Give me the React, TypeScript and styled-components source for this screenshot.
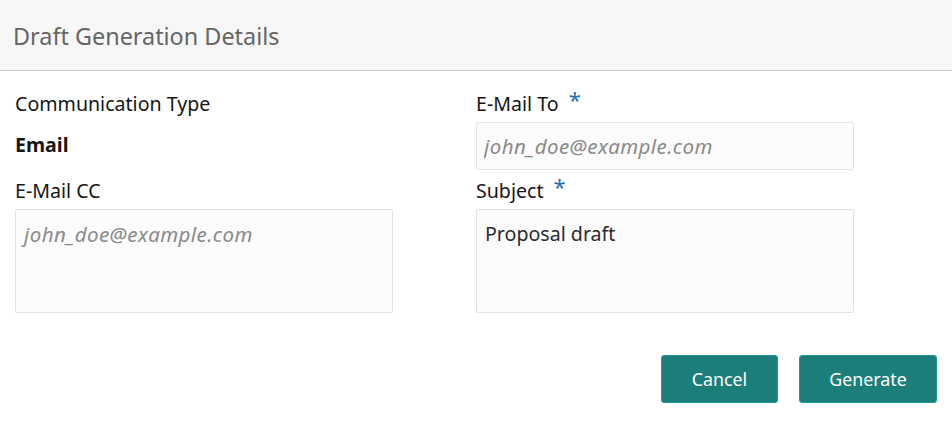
import React from "react";
import styled, { createGlobalStyle } from "styled-components";

const GlobalStyle = createGlobalStyle`
  html, body {
    margin: 0;
    padding: 0;
    background: #ffffff;
    font-family: "Noto Sans", "Open Sans", sans-serif;
  }
  * { box-sizing: border-box; }
`;

const App = () => {
  return (
    <>
      <GlobalStyle />
      <Panel>
        <Header>
          <Title>Draft Generation Details</Title>
        </Header>
        <Body>
          <Field>
            <Label>Communication Type</Label>
            <Value>Email</Value>
          </Field>
          <Field>
            <Label>
              E-Mail To <Required>*</Required>
            </Label>
            <Input placeholder="john_doe@example.com" />
          </Field>
          <Field>
            <Label>E-Mail CC</Label>
            <TextArea placeholder="john_doe@example.com" />
          </Field>
          <Field>
            <Label>
              Subject <Required>*</Required>
            </Label>
            <TextArea defaultValue="Proposal draft" />
          </Field>
        </Body>
        <Footer>
          <Button>Cancel</Button>
          <Button wide>Generate</Button>
        </Footer>
      </Panel>
    </>
  );
};

export default App;

const Panel = styled.div`
  width: 952px;
  height: 429px;
  display: flex;
  flex-direction: column;
`;

const Header = styled.div`
  height: 71px;
  background: #f7f7f7;
  border-bottom: 1px solid #cccccc;
  display: flex;
  align-items: center;
  padding: 2px 13px 0 13px;
`;

const Title = styled.h1`
  margin: 0;
  font-size: 23.4px;
  font-weight: 400;
  color: #666666;
`;

const Body = styled.div`
  display: grid;
  grid-template-columns: 378px 378px;
  column-gap: 83px;
  row-gap: 7px;
  padding: 19px 15px 0 15px;
`;

const Field = styled.div`
  display: flex;
  flex-direction: column;
`;

const Label = styled.div`
  font-size: 19.6px;
  line-height: 28px;
  color: #161616;
  margin-bottom: 4px;
`;

const Required = styled.span`
  color: #1f6fb5;
  font-size: 22px;
  vertical-align: top;
  position: relative;
  top: -5px;
  margin-left: 5px;
`;

const Value = styled.div`
  font-size: 19.6px;
  font-weight: 700;
  line-height: 28px;
  color: #161616;
  margin-top: 9px;
`;

const Input = styled.input`
  height: 48px;
  width: 100%;
  background: #fcfcfc;
  border: 1px solid #e3e3e3;
  border-radius: 2px;
  padding: 0 7px;
  font-family: inherit;
  font-size: 20.5px;
  color: #333;
  outline: none;

  &::placeholder {
    color: #8a8a8a;
    font-style: italic;
    letter-spacing: 0.4px;
  }
`;

const TextArea = styled.textarea`
  height: 104px;
  width: 100%;
  resize: none;
  background: #fcfcfc;
  border: 1px solid #e3e3e3;
  border-radius: 2px;
  padding: 11px 8px;
  font-family: inherit;
  font-size: 19.6px;
  line-height: 26px;
  color: #2b2b2b;
  outline: none;

  &::placeholder {
    color: #8a8a8a;
    font-size: 20.5px;
    font-style: italic;
    letter-spacing: 0.4px;
  }
`;

const Footer = styled.div`
  display: flex;
  justify-content: flex-end;
  gap: 21px;
  padding: 42px 15px 0 0;
`;

const Button = styled.button<{ wide?: boolean }>`
  height: 48px;
  width: ${(p) => (p.wide ? "138px" : "117px")};
  background: #1b7e78;
  border: 1px solid #1f9a92;
  border-radius: 3px;
  color: #ffffff;
  font-family: inherit;
  font-size: 17.8px;
  cursor: pointer;
`;
